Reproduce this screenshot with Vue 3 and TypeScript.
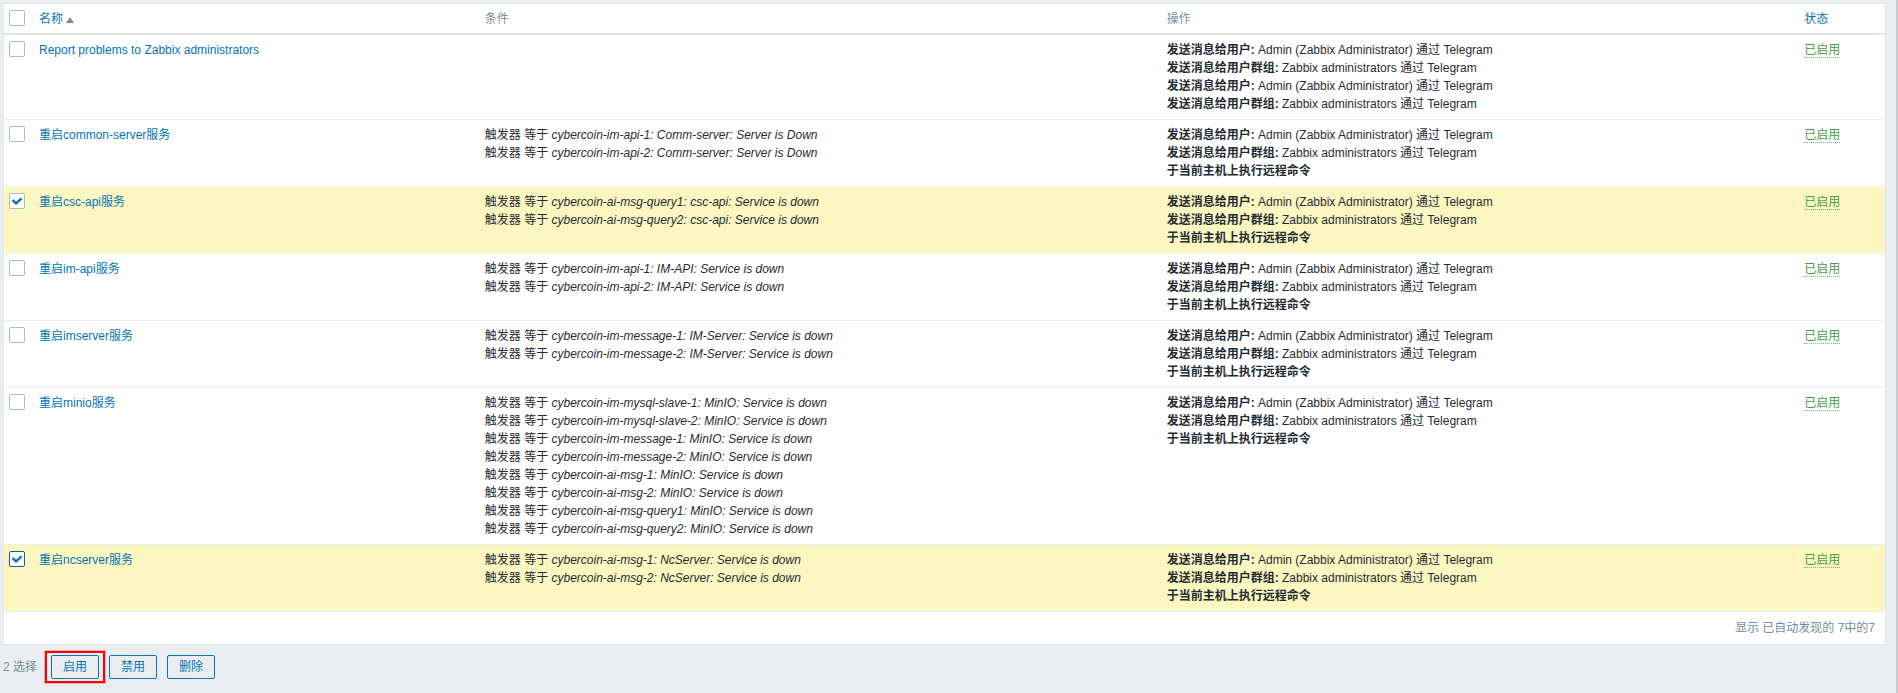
<script setup lang="ts">
import { computed, ref } from 'vue'

interface Operation {
  label: string
  detail?: string
}

interface Action {
  id: number
  name: string
  conditions: string[]
  operations: Operation[]
  focused?: boolean
}

const toUser: Operation = { label: '发送消息给用户:', detail: 'Admin (Zabbix Administrator) 通过 Telegram' }
const toGroup: Operation = { label: '发送消息给用户群组:', detail: 'Zabbix administrators 通过 Telegram' }
const remote: Operation = { label: '于当前主机上执行远程命令' }

const actions: Action[] = [
  { id: 1, name: 'Report problems to Zabbix administrators', conditions: [], operations: [toUser, toGroup, toUser, toGroup] },
  {
    id: 2,
    name: '重启common-server服务',
    conditions: ['cybercoin-im-api-1: Comm-server: Server is Down', 'cybercoin-im-api-2: Comm-server: Server is Down'],
    operations: [toUser, toGroup, remote],
  },
  {
    id: 3,
    name: '重启csc-api服务',
    conditions: ['cybercoin-ai-msg-query1: csc-api: Service is down', 'cybercoin-ai-msg-query2: csc-api: Service is down'],
    operations: [toUser, toGroup, remote],
  },
  {
    id: 4,
    name: '重启im-api服务',
    conditions: ['cybercoin-im-api-1: IM-API: Service is down', 'cybercoin-im-api-2: IM-API: Service is down'],
    operations: [toUser, toGroup, remote],
  },
  {
    id: 5,
    name: '重启imserver服务',
    conditions: ['cybercoin-im-message-1: IM-Server: Service is down', 'cybercoin-im-message-2: IM-Server: Service is down'],
    operations: [toUser, toGroup, remote],
  },
  {
    id: 6,
    name: '重启minio服务',
    conditions: [
      'cybercoin-im-mysql-slave-1: MinIO: Service is down',
      'cybercoin-im-mysql-slave-2: MinIO: Service is down',
      'cybercoin-im-message-1: MinIO: Service is down',
      'cybercoin-im-message-2: MinIO: Service is down',
      'cybercoin-ai-msg-1: MinIO: Service is down',
      'cybercoin-ai-msg-2: MinIO: Service is down',
      'cybercoin-ai-msg-query1: MinIO: Service is down',
      'cybercoin-ai-msg-query2: MinIO: Service is down',
    ],
    operations: [toUser, toGroup, remote],
  },
  {
    id: 7,
    name: '重启ncserver服务',
    conditions: ['cybercoin-ai-msg-1: NcServer: Service is down', 'cybercoin-ai-msg-2: NcServer: Service is down'],
    operations: [toUser, toGroup, remote],
    focused: true,
  },
]

const selected = ref<number[]>([3, 7])
const allSelected = computed(() => selected.value.length === actions.length)

function toggleAll(): void {
  selected.value = allSelected.value ? [] : actions.map((a) => a.id)
}
</script>

<template>
  <main class="page">
    <form @submit.prevent>
      <div class="panel">
        <table class="list">
          <colgroup>
            <col class="col-check" />
            <col class="col-name" />
            <col class="col-conditions" />
            <col class="col-operations" />
            <col />
          </colgroup>
          <thead>
            <tr>
              <th>
                <label class="check">
                  <input type="checkbox" aria-label="全选" :checked="allSelected" @change="toggleAll" />
                  <svg viewBox="0 0 16 16" aria-hidden="true"><path d="M3.5 7 7 10.4 12.6 5.4" /></svg>
                </label>
              </th>
              <th><a href="#name">名称<span class="sort-up"></span></a></th>
              <th>条件</th>
              <th>操作</th>
              <th><a href="#status">状态</a></th>
            </tr>
          </thead>
          <tbody>
            <tr v-for="action in actions" :key="action.id" :class="{ selected: selected.includes(action.id) }">
              <td>
                <label class="check" :class="{ focused: action.focused }">
                  <input v-model="selected" type="checkbox" :value="action.id" :aria-label="action.name" />
                  <svg viewBox="0 0 16 16" aria-hidden="true"><path d="M3.5 7 7 10.4 12.6 5.4" /></svg>
                </label>
              </td>
              <td><a href="#edit">{{ action.name }}</a></td>
              <td>
                <div v-for="condition in action.conditions" :key="condition">触发器 等于 <em>{{ condition }}</em></div>
              </td>
              <td>
                <div v-for="(op, i) in action.operations" :key="i"><b>{{ op.label }}</b> {{ op.detail }}</div>
              </td>
              <td><a href="#toggle" class="enabled">已启用</a></td>
            </tr>
          </tbody>
        </table>
        <div class="stats">显示 已自动发现的 7中的7</div>
      </div>
      <div class="footer">
        <span class="count">{{ selected.length }} 选择</span>
        <span class="marked"><button type="button">启用</button></span>
        <button type="button">禁用</button>
        <button type="button">删除</button>
      </div>
    </form>
  </main>
</template>

<style>
body {
  margin: 0;
  background: #ebeef0;
}
</style>

<style scoped>
.page {
  box-sizing: border-box;
  min-height: 100vh;
  padding: 3px 10px 10px 3px;
  border-right: 2px solid #cccccc;
  background: #ebeef0;
  color: #1f2c33;
  font: 12px/18px "Liberation Sans", Arial, "Noto Sans CJK SC", sans-serif;
}

.panel {
  border: 1px solid #dfe4e7;
  background: #ffffff;
}

.list {
  width: 100%;
  table-layout: fixed;
  border-collapse: separate;
  border-spacing: 0;
}

.col-check {
  width: 30px;
}

.col-name {
  width: 23.7%;
}

.col-conditions {
  width: 36.25%;
}

.col-operations {
  width: 33.9%;
}

th {
  padding: 6px 5px 5px;
  border-bottom: 2px solid #dfe4e7;
  color: #768d99;
  font-weight: normal;
  text-align: left;
  vertical-align: top;
}

td {
  padding: 6px 5px;
  border-bottom: 1px solid #ebeef0;
  vertical-align: top;
}

.selected td {
  background: #fcf6c1;
}

a {
  color: #0275b8;
  text-decoration: none;
}

.sort-up {
  display: inline-block;
  margin-left: 3px;
  border: 4px solid transparent;
  border-top: 0;
  border-bottom: 6px solid #768d99;
}

.enabled {
  border-bottom: 1px dotted rgba(66, 158, 71, 0.7);
  color: #429e47;
}

.check {
  display: grid;
  width: 16px;
  height: 16px;
}

.check input,
.check svg {
  grid-area: 1 / 1;
  width: 16px;
  height: 16px;
  margin: 0;
}

.check input {
  box-sizing: border-box;
  appearance: none;
  border: 1px solid #acbbc2;
  border-radius: 2px;
  background: #ffffff;
}

.check.focused input {
  border-color: #0b6195;
}

.check svg {
  visibility: hidden;
  fill: none;
  stroke: #0275b8;
  stroke-width: 2.4;
  pointer-events: none;
}

.check input:checked + svg {
  visibility: visible;
}

.stats {
  padding: 7px 10px;
  color: #768d99;
  text-align: right;
}

.footer {
  display: flex;
  align-items: center;
  gap: 10px;
  padding-top: 10px;
}

.count {
  margin-right: 4px;
  color: #768d99;
}

button {
  box-sizing: border-box;
  height: 24px;
  padding: 0 11px;
  border: 1px solid #0275b8;
  border-radius: 2px;
  background: transparent;
  color: #0275b8;
  font: inherit;
}

.marked {
  position: relative;
  display: flex;
}

.marked::after {
  position: absolute;
  inset: -4px -6px;
  border: 2px solid #ff0000;
  box-shadow: 0 0 0 1px rgba(255, 0, 0, 0.25);
  content: "";
  pointer-events: none;
}
</style>
